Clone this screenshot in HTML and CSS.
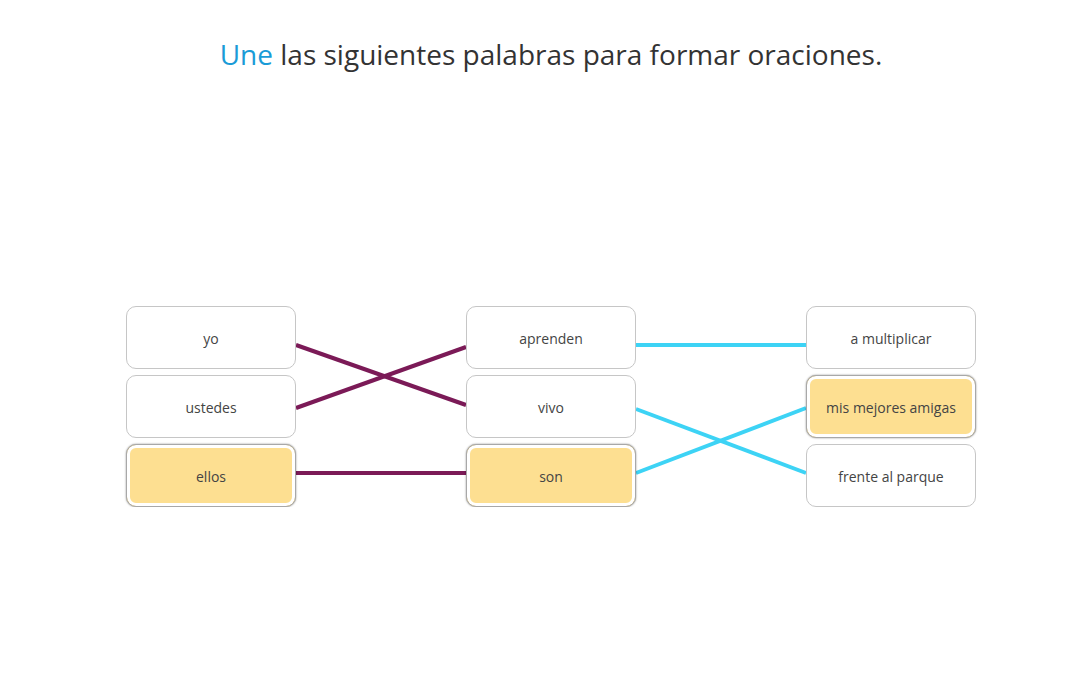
FILE: index.html
```html
<!DOCTYPE html>
<html lang="es">
<head>
    <meta charset="UTF-8">
    <meta name="viewport" content="width=device-width, initial-scale=1.0">
    <title>Une las palabras</title>
    <link rel="stylesheet" href="styles.css">
</head>
<body>
    <div class="page">
        <h1 class="title"><span class="accent">Une</span> las siguientes palabras para formar oraciones.</h1>

        <div class="board">
            <!-- Connection lines -->
            <svg class="lines" width="850" height="202" viewBox="126 306 850 202">
                <line x1="296" y1="345" x2="466" y2="405" stroke="#7b1a57" stroke-width="4"/>
                <line x1="296" y1="408" x2="466" y2="347" stroke="#7b1a57" stroke-width="4"/>
                <line x1="296" y1="473" x2="466" y2="473" stroke="#7b1a57" stroke-width="4"/>
                <line x1="636" y1="345" x2="806" y2="345" stroke="#3dd3f5" stroke-width="4"/>
                <line x1="636" y1="409" x2="806" y2="473" stroke="#3dd3f5" stroke-width="4"/>
                <line x1="636" y1="473" x2="806" y2="408" stroke="#3dd3f5" stroke-width="4"/>
            </svg>

            <div class="column">
                <div class="word">yo</div>
                <div class="word">ustedes</div>
                <div class="word selected">ellos</div>
            </div>
            <div class="column">
                <div class="word">aprenden</div>
                <div class="word">vivo</div>
                <div class="word selected">son</div>
            </div>
            <div class="column">
                <div class="word">a multiplicar</div>
                <div class="word selected">mis mejores amigas</div>
                <div class="word">frente al parque</div>
            </div>
        </div>
    </div>
</body>
</html>
```

FILE: styles.css
```css
body {
    margin: 0;
    padding: 0;
    background: white;
    font-family: "Open Sans", "Noto Sans", sans-serif;
    color: #333;
}

.page {
    padding-left: 25px;
    display: flex;
    flex-direction: column;
    align-items: center;
}

/* Title */
.title {
    margin: 34px 0 0;
    font-size: 28px;
    font-weight: normal;
    line-height: 40px;
    color: #333;
}

.accent {
    color: #1a9bd7;
}

/* Board */
.board {
    position: relative;
    display: flex;
    gap: 170px;
    margin-top: 232px;
}

.lines {
    position: absolute;
    top: 0;
    left: 0;
    z-index: 0;
}

.column {
    display: flex;
    flex-direction: column;
    gap: 6px;
}

.word {
    position: relative;
    z-index: 1;
    box-sizing: border-box;
    width: 170px;
    height: 63px;
    padding-top: 2px;
    border: 1px solid #c6c6c6;
    border-radius: 10px;
    background: white;
    display: flex;
    justify-content: center;
    align-items: center;
    font-size: 14px;
    color: #444;
}

.word.selected {
    border-color: #a8a8a8;
    box-shadow: 0 0 2px rgba(0,0,0,0.45), inset 0 0 0 3px white;
    background: #fddf91;
}
```
